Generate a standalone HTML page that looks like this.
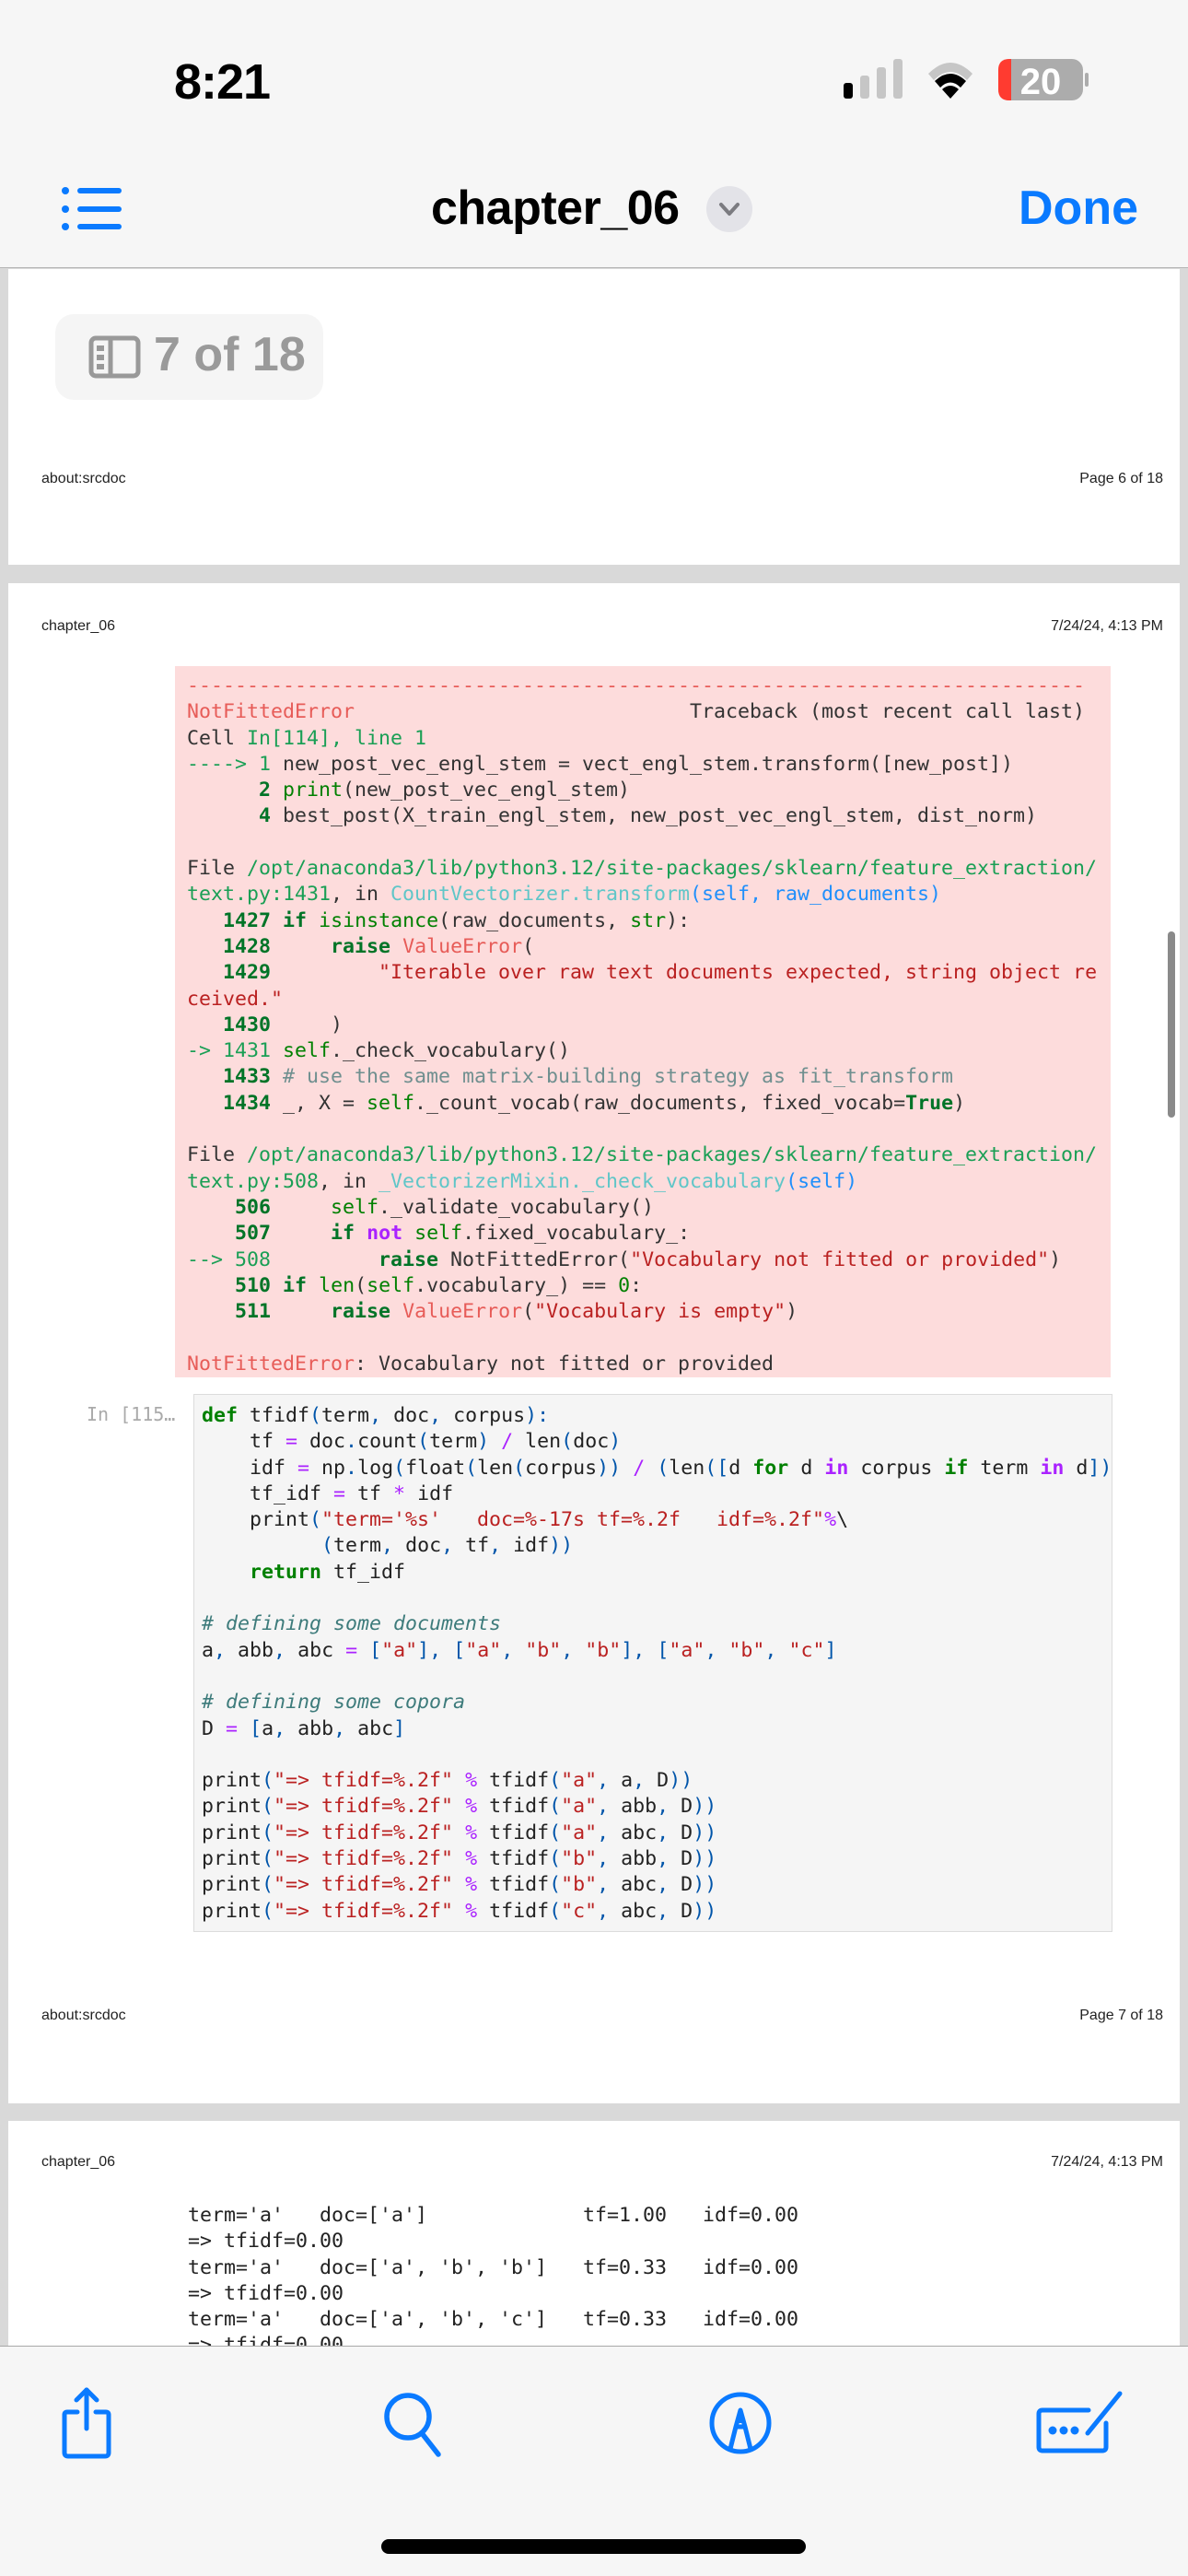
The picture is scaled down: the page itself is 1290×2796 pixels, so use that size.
<!DOCTYPE html>
<html><head><meta charset="utf-8"><style>
*{margin:0;padding:0;box-sizing:border-box}
body{width:1290px;height:2796px;position:relative;overflow:hidden;background:#d9d9d9;font-family:"Liberation Sans",sans-serif}
.abs{position:absolute}
.page{position:absolute;left:9px;width:1272px;background:#fff}
.small{position:absolute;font-size:16px;color:#222;line-height:20px}
pre{font-family:"DejaVu Sans Mono","Liberation Mono",monospace;font-size:21.6px;line-height:28.3px;white-space:pre;color:#333}
.g{color:#1a9f55}.gb{color:#007427;font-weight:bold}.gs{color:#008000}.r{color:#e75c58}.rs{color:#ba2121}.c{color:#60c6c8}.b{color:#208ffb}.cm{color:#6f8f8f}.p{color:#aa22ff;font-weight:bold}
.k{color:#008000;font-weight:bold}.o{color:#aa22ff}.pu{color:#0055aa}.s{color:#ba2121}.ci{color:#3d7b7b;font-style:italic}
</style></head><body>
<!-- top bar -->
<div class="abs" style="left:0;top:0;width:1290px;height:291px;background:#f6f6f6;border-bottom:1.5px solid #b5b5b5"></div>
<div class="abs" style="left:189px;top:58px;font-size:54px;font-weight:bold;letter-spacing:-1px;color:#000">8:21</div>
<svg class="abs" style="left:912px;top:60px" width="270" height="52" viewBox="0 0 270 52">
<rect x="4" y="30" width="10" height="17" rx="3" fill="#000"/>
<rect x="22" y="22" width="10" height="25" rx="3" fill="#c6c6c6"/>
<rect x="40" y="13" width="10" height="34" rx="3" fill="#c6c6c6"/>
<rect x="58" y="4" width="10" height="43" rx="3" fill="#c6c6c6"/>
<path d="M96 20 Q120 -4 144 20 L138 27 Q120 9 102 27Z" fill="#c6c6c6"/>
<path d="M103 28 Q120 12 137 28 L131 35 Q120 24 109 35Z" fill="#000"/>
<path d="M111 37 Q120 29 129 37 L120 47Z" fill="#000"/>
<rect x="172" y="4" width="92" height="45" rx="12" fill="#acacac"/>
<path d="M184 4 L186 4 L186 49 L184 49 Q172 49 172 37 L172 16 Q172 4 184 4Z" fill="#ff3b30"/>
<rect x="266" y="19" width="4" height="15" rx="2" fill="#acacac"/>
<text x="218" y="42" text-anchor="middle" font-family="Liberation Sans" font-weight="bold" font-size="40" fill="#fff">20</text>
</svg>
<svg class="abs" style="left:66px;top:200px" width="70" height="52" viewBox="0 0 70 52">
<g fill="#0a7aff"><circle cx="5" cy="7" r="4"/><circle cx="5" cy="27" r="4"/><circle cx="5" cy="46" r="4"/>
<rect x="18" y="4" width="48" height="6" rx="3"/><rect x="18" y="24" width="48" height="6" rx="3"/><rect x="18" y="43" width="48" height="6" rx="3"/></g></svg>
<div class="abs" style="left:468px;top:196px;font-size:52px;font-weight:bold;color:#000;letter-spacing:-0.5px">chapter_06</div>
<svg class="abs" style="left:766px;top:201px" width="52" height="52"><circle cx="26" cy="26" r="25" fill="#e3e3e8"/><path d="M17 21 L26 31 L35 21" stroke="#7b7b80" stroke-width="4" fill="none" stroke-linecap="round" stroke-linejoin="round"/></svg>
<div class="abs" style="left:1106px;top:196px;font-size:52px;font-weight:bold;color:#0a7aff">Done</div>

<!-- page 6 bottom -->
<div class="page" style="top:292px;height:321px"></div>
<div class="abs" style="left:60px;top:341px;width:291px;height:93px;background:#f5f5f5;border-radius:20px"></div>
<svg class="abs" style="left:96px;top:364px" width="58" height="48"><rect x="3" y="3" width="51" height="41" rx="5" fill="none" stroke="#999" stroke-width="5"/><line x1="24" y1="3" x2="24" y2="44" stroke="#999" stroke-width="5"/><rect x="9" y="11" width="8" height="6" fill="#999"/><rect x="9" y="21" width="8" height="6" fill="#999"/><rect x="9" y="31" width="8" height="6" fill="#999"/></svg>
<div class="abs" style="left:167px;top:355px;font-size:52px;font-weight:bold;color:#9a9a9a">7 of 18</div>
<div class="small" style="left:45px;top:510px">about:srcdoc</div>
<div class="small" style="right:27px;top:510px">Page 6 of 18</div>

<!-- page 7 -->
<div class="page" style="top:633px;height:1650px"></div>
<div class="small" style="left:45px;top:670px">chapter_06</div>
<div class="small" style="right:27px;top:670px">7/24/24, 4:13 PM</div>
<div class="abs" style="left:190px;top:723px;width:1016px;height:772px;background:#fddcdc;overflow:hidden">
<pre style="margin:8px 0 0 13px"><span class="r">---------------------------------------------------------------------------</span>
<span class="r">NotFittedError</span>                            Traceback (most recent call last)
Cell <span class="g">In[114], line 1</span>
<span class="g">----&gt; 1</span> new_post_vec_engl_stem = vect_engl_stem.transform([new_post])
<span class="gb">      2</span> <span class="gs">print</span>(new_post_vec_engl_stem)
<span class="gb">      4</span> best_post(X_train_engl_stem, new_post_vec_engl_stem, dist_norm)

File <span class="g">/opt/anaconda3/lib/python3.12/site-packages/sklearn/feature_extraction/</span>
<span class="g">text.py:1431</span>, in <span class="c">CountVectorizer.transform</span><span class="b">(self, raw_documents)</span>
<span class="gb">   1427</span> <span class="gb">if</span> <span class="gs">isinstance</span>(raw_documents, <span class="gs">str</span>):
<span class="gb">   1428</span>     <span class="gb">raise</span> <span class="r">ValueError</span>(
<span class="gb">   1429</span>         <span class="rs">"Iterable over raw text documents expected, string object re</span>
<span class="rs">ceived."</span>
<span class="gb">   1430</span>     )
<span class="g">-&gt; 1431</span> <span class="gs">self</span>._check_vocabulary()
<span class="gb">   1433</span> <span class="cm"># use the same matrix-building strategy as fit_transform</span>
<span class="gb">   1434</span> _, X = <span class="gs">self</span>._count_vocab(raw_documents, fixed_vocab=<span class="gb">True</span>)

File <span class="g">/opt/anaconda3/lib/python3.12/site-packages/sklearn/feature_extraction/</span>
<span class="g">text.py:508</span>, in <span class="c">_VectorizerMixin._check_vocabulary</span><span class="b">(self)</span>
<span class="gb">    506</span>     <span class="gs">self</span>._validate_vocabulary()
<span class="gb">    507</span>     <span class="gb">if</span> <span class="p">not</span> <span class="gs">self</span>.fixed_vocabulary_:
<span class="g">--&gt; 508</span>         <span class="gb">raise</span> NotFittedError(<span class="rs">"Vocabulary not fitted or provided"</span>)
<span class="gb">    510</span> <span class="gb">if</span> <span class="gs">len</span>(<span class="gs">self</span>.vocabulary_) == <span class="gs">0</span>:
<span class="gb">    511</span>     <span class="gb">raise</span> <span class="r">ValueError</span>(<span class="rs">"Vocabulary is empty"</span>)

<span class="r">NotFittedError</span>: Vocabulary not fitted or provided</pre></div>

<div class="abs" style="left:94px;top:1523px;font-family:'DejaVu Sans Mono',monospace;font-size:20px;color:#aaa">In [115…</div>
<div class="abs" style="left:210px;top:1513px;width:998px;height:584px;background:#f5f5f5;border:1.5px solid #dcdcdc;overflow:hidden">
<pre style="margin:9px 0 0 8px;color:#222"><span class="k">def</span> tfidf<span class="pu">(</span>term<span class="pu">,</span> doc<span class="pu">,</span> corpus<span class="pu">):</span>
    tf <span class="o">=</span> doc<span class="pu">.</span>count<span class="pu">(</span>term<span class="pu">)</span> <span class="o">/</span> len<span class="pu">(</span>doc<span class="pu">)</span>
    idf <span class="o">=</span> np<span class="pu">.</span>log<span class="pu">(</span>float<span class="pu">(</span>len<span class="pu">(</span>corpus<span class="pu">))</span> <span class="o">/</span> <span class="pu">(</span>len<span class="pu">([</span>d <span class="k">for</span> d <span class="p">in</span> corpus <span class="k">if</span> term <span class="p">in</span> d<span class="pu">]))</span>
    tf_idf <span class="o">=</span> tf <span class="o">*</span> idf
    print<span class="pu">(</span><span class="s">"term='%s'   doc=%-17s tf=%.2f   idf=%.2f"</span><span class="o">%</span>\
          <span class="pu">(</span>term<span class="pu">,</span> doc<span class="pu">,</span> tf<span class="pu">,</span> idf<span class="pu">))</span>
    <span class="k">return</span> tf_idf

<span class="ci"># defining some documents</span>
a<span class="pu">,</span> abb<span class="pu">,</span> abc <span class="o">=</span> <span class="pu">[</span><span class="s">"a"</span><span class="pu">],</span> <span class="pu">[</span><span class="s">"a"</span><span class="pu">,</span> <span class="s">"b"</span><span class="pu">,</span> <span class="s">"b"</span><span class="pu">],</span> <span class="pu">[</span><span class="s">"a"</span><span class="pu">,</span> <span class="s">"b"</span><span class="pu">,</span> <span class="s">"c"</span><span class="pu">]</span>

<span class="ci"># defining some copora</span>
D <span class="o">=</span> <span class="pu">[</span>a<span class="pu">,</span> abb<span class="pu">,</span> abc<span class="pu">]</span>

print<span class="pu">(</span><span class="s">"=&gt; tfidf=%.2f"</span> <span class="o">%</span> tfidf<span class="pu">(</span><span class="s">"a"</span><span class="pu">,</span> a<span class="pu">,</span> D<span class="pu">))</span>
print<span class="pu">(</span><span class="s">"=&gt; tfidf=%.2f"</span> <span class="o">%</span> tfidf<span class="pu">(</span><span class="s">"a"</span><span class="pu">,</span> abb<span class="pu">,</span> D<span class="pu">))</span>
print<span class="pu">(</span><span class="s">"=&gt; tfidf=%.2f"</span> <span class="o">%</span> tfidf<span class="pu">(</span><span class="s">"a"</span><span class="pu">,</span> abc<span class="pu">,</span> D<span class="pu">))</span>
print<span class="pu">(</span><span class="s">"=&gt; tfidf=%.2f"</span> <span class="o">%</span> tfidf<span class="pu">(</span><span class="s">"b"</span><span class="pu">,</span> abb<span class="pu">,</span> D<span class="pu">))</span>
print<span class="pu">(</span><span class="s">"=&gt; tfidf=%.2f"</span> <span class="o">%</span> tfidf<span class="pu">(</span><span class="s">"b"</span><span class="pu">,</span> abc<span class="pu">,</span> D<span class="pu">))</span>
print<span class="pu">(</span><span class="s">"=&gt; tfidf=%.2f"</span> <span class="o">%</span> tfidf<span class="pu">(</span><span class="s">"c"</span><span class="pu">,</span> abc<span class="pu">,</span> D<span class="pu">))</span></pre></div>
<div class="small" style="left:45px;top:2178px">about:srcdoc</div>
<div class="small" style="right:27px;top:2178px">Page 7 of 18</div>
<div class="abs" style="left:1268px;top:1011px;width:8px;height:202px;background:#8a8a8a;border-radius:4px"></div>

<!-- page 8 -->
<div class="page" style="top:2302px;height:300px"></div>
<div class="small" style="left:45px;top:2337px">chapter_06</div>
<div class="small" style="right:27px;top:2337px">7/24/24, 4:13 PM</div>
<pre class="abs" style="left:204px;top:2391px;color:#222">term='a'   doc=['a']             tf=1.00   idf=0.00
=&gt; tfidf=0.00
term='a'   doc=['a', 'b', 'b']   tf=0.33   idf=0.00
=&gt; tfidf=0.00
term='a'   doc=['a', 'b', 'c']   tf=0.33   idf=0.00
=&gt; tfidf=0.00</pre>

<!-- bottom toolbar -->
<div class="abs" style="left:0;top:2546px;width:1290px;height:250px;background:#f6f6f6;border-top:1.5px solid #a8a8a8"></div>
<svg class="abs" style="left:66px;top:2590px" width="60" height="80" viewBox="0 0 60 80"><g fill="none" stroke="#0a7aff" stroke-width="5" stroke-linecap="round" stroke-linejoin="round">
<path d="M18 28 L7 28 Q4 28 4 31 L4 72 Q4 76 8 76 L48 76 Q52 76 52 72 L52 31 Q52 28 49 28 L38 28"/><path d="M28 46 L28 4"/><path d="M17 15 L28 4 L39 15"/></g></svg>
<svg class="abs" style="left:415px;top:2596px" width="70" height="72" viewBox="0 0 70 72"><g fill="none" stroke="#0a7aff" stroke-width="5.5" stroke-linecap="round"><circle cx="28" cy="27" r="23"/><path d="M43 45 L61 68"/></g></svg>
<svg class="abs" style="left:769px;top:2594px" width="70" height="72" viewBox="0 0 70 72"><g fill="none" stroke="#0a7aff" stroke-width="5" stroke-linejoin="round"><circle cx="35" cy="36" r="31"/><path d="M24 64 L30 40 L35 22 L40 40 L46 64"/><path d="M30 40 L40 40"/></g><path d="M35 22 L31 36 L39 36Z" fill="#0a7aff"/></svg>
<svg class="abs" style="left:1124px;top:2594px" width="100" height="72" viewBox="0 0 100 72"><g fill="none" stroke="#0a7aff" stroke-width="5" stroke-linecap="round" stroke-linejoin="round"><path d="M58 22 L8 22 Q4 22 4 26 L4 62 Q4 66 8 66 L73 66 Q77 66 77 62 L77 36"/><path d="M57 47 L92 4"/></g><g fill="#0a7aff"><circle cx="19" cy="44" r="4.5"/><circle cx="31" cy="44" r="4.5"/><circle cx="43" cy="44" r="4.5"/></g></svg>
<div class="abs" style="left:414px;top:2756px;width:461px;height:16px;background:#000;border-radius:8px"></div>
</body></html>
